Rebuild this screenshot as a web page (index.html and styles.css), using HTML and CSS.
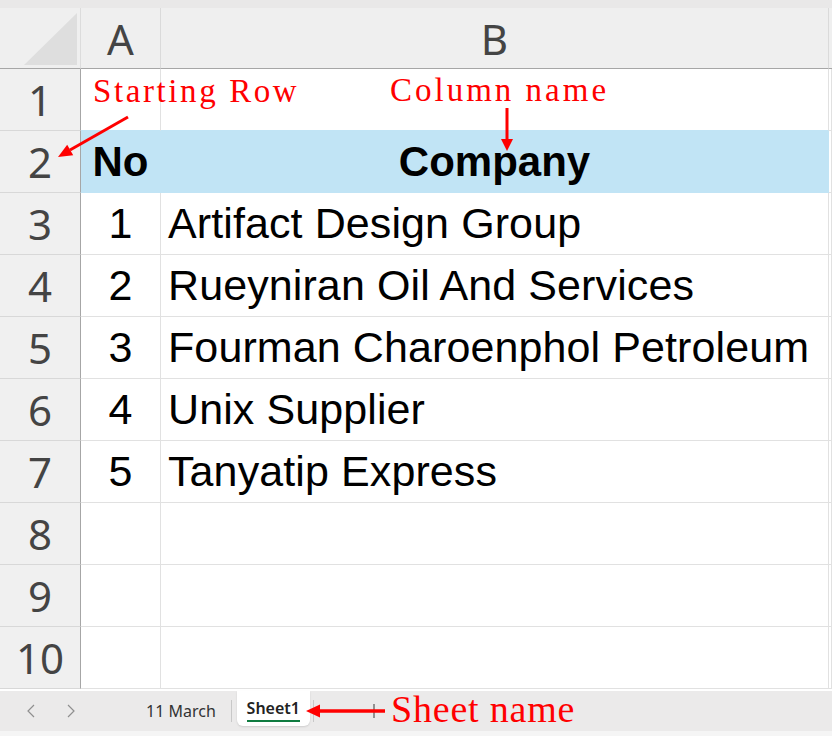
FILE: index.html
```html
<!DOCTYPE html>
<html>
<head>
<meta charset="utf-8">
<link rel="stylesheet" href="styles.css">
</head>
<body>
<div class="app">
  <div class="topstrip"></div>
  <div class="grid">
    <div class="cell corner"><div class="tri"></div></div>
    <div class="cell ch">A</div>
    <div class="cell ch">B</div>
    <div class="cell ch edge"></div>

    <div class="cell rh">1</div>
    <div class="cell c r1"></div>
    <div class="cell c r1"></div>
    <div class="cell c"></div>

    <div class="cell rh">2</div>
    <div class="cell c hdr num">No</div>
    <div class="cell c hdr center">Company</div>
    <div class="cell c"></div>

    <div class="cell rh">3</div>
    <div class="cell c num">1</div>
    <div class="cell c txt">Artifact Design Group</div>
    <div class="cell c"></div>

    <div class="cell rh">4</div>
    <div class="cell c num">2</div>
    <div class="cell c txt">Rueyniran Oil And Services</div>
    <div class="cell c"></div>

    <div class="cell rh">5</div>
    <div class="cell c num">3</div>
    <div class="cell c txt">Fourman Charoenphol Petroleum</div>
    <div class="cell c"></div>

    <div class="cell rh">6</div>
    <div class="cell c num">4</div>
    <div class="cell c txt">Unix Supplier</div>
    <div class="cell c"></div>

    <div class="cell rh">7</div>
    <div class="cell c num">5</div>
    <div class="cell c txt">Tanyatip Express</div>
    <div class="cell c"></div>

    <div class="cell rh">8</div>
    <div class="cell c"></div>
    <div class="cell c"></div>
    <div class="cell c"></div>

    <div class="cell rh">9</div>
    <div class="cell c"></div>
    <div class="cell c"></div>
    <div class="cell c"></div>

    <div class="cell rh">10</div>
    <div class="cell c"></div>
    <div class="cell c"></div>
    <div class="cell c"></div>
  </div>
  <div class="gap"></div>
  <div class="tabbar">
    <svg class="chev chev-l" width="8" height="14" viewBox="0 0 8 14"><polyline points="7,1 1,7 7,13" fill="none" stroke="#8f8f8f" stroke-width="1.2"/></svg>
    <svg class="chev chev-r" width="8" height="14" viewBox="0 0 8 14"><polyline points="1,1 7,7 1,13" fill="none" stroke="#8f8f8f" stroke-width="1.2"/></svg>
    <div class="tab">11 March</div>
    <div class="sep sep1"></div>
    <div class="tab active"><span class="tablabel">Sheet1</span></div>
    <div class="sep sep2"></div>
    <svg class="plus" width="14" height="14" viewBox="0 0 14 14"><line x1="7" y1="0" x2="7" y2="14" stroke="#555" stroke-width="1.2"/><line x1="0" y1="7" x2="14" y2="7" stroke="#555" stroke-width="1.2"/></svg>
  </div>
  <div class="bottomstrip"></div>

  <div class="note note-start">Starting Row</div>
  <div class="note note-col">Column name</div>
  <div class="note note-sheet">Sheet name</div>
  <svg class="arrows" width="832" height="736" viewBox="0 0 832 736">
    <line x1="128" y1="117" x2="70" y2="150" stroke="#ff0000" stroke-width="3"/>
    <polygon points="58,157 73.2,155.3 67.2,144.8" fill="#ff0000"/>
    <line x1="507" y1="108" x2="507" y2="140" stroke="#ff0000" stroke-width="3"/>
    <polygon points="501,139 513,139 507,151" fill="#ff0000"/>
    <line x1="318" y1="711" x2="385" y2="711" stroke="#ff0000" stroke-width="3.5"/>
    <polygon points="306,711 320,704.5 320,717.5" fill="#ff0000"/>
  </svg>
</div>
</body>
</html>
```

FILE: styles.css
```css
html, body {
  margin: 0;
  padding: 0;
  background: #ffffff;
}

.app {
  position: relative;
  width: 832px;
  height: 736px;
  overflow: hidden;
}

.topstrip {
  height: 8px;
  background: #e9e8e8;
}

.grid {
  display: grid;
  grid-template-columns: 81px 80px 668px 3px;
  grid-template-rows: 61px repeat(10, 62px);
}

.cell {
  box-sizing: border-box;
  border-right: 1px solid #e1e1e1;
  border-bottom: 1px solid #e1e1e1;
  display: flex;
  align-items: center;
  overflow: hidden;
  white-space: nowrap;
}

.corner {
  background: #efefef;
  border-right-color: #dcdcdc;
  border-bottom-color: #a6a6a6;
  justify-content: flex-end;
  align-items: flex-end;
  padding: 0 3px 3px 0;
}

.tri {
  width: 53px;
  height: 52px;
  background: #dedede;
  clip-path: polygon(100% 0, 100% 100%, 0 100%);
}

.ch {
  background: #efefef;
  border-bottom-color: #a6a6a6;
  border-right-color: #dadada;
  justify-content: center;
  font-family: "Noto Sans", sans-serif;
  font-size: 42px;
  color: #444444;
  padding-top: 1px;
}

.ch.edge {
  border-right: none;
}

.rh {
  background: #f0f0f0;
  border-right-color: #a6a6a6;
  border-bottom-color: #d8d8d8;
  justify-content: center;
  font-family: "Noto Sans", sans-serif;
  font-size: 42px;
  color: #444444;
}

.c {
  background: #ffffff;
  font-family: "Liberation Sans", Arial, sans-serif;
  font-size: 43px;
  color: #000000;
}

.r1 {
  border-bottom-color: #c1e4f5;
}

.hdr {
  background: #c1e4f5;
  border-right-color: #c1e4f5;
  border-bottom-color: #c1e4f5;
  font-weight: bold;
  font-size: 42px;
}

.num {
  justify-content: center;
}

.center {
  justify-content: center;
}

.txt {
  padding-left: 7px;
  letter-spacing: 0.1px;
}

.gap {
  height: 2px;
  background: #ffffff;
}

.tabbar {
  height: 40px;
  background: #ebeaea;
  display: flex;
  align-items: center;
  font-family: "Noto Sans", sans-serif;
  font-size: 16px;
  color: #333333;
}

.chev-l {
  margin-left: 27px;
}

.chev-r {
  margin-left: 32px;
}

.tab {
  margin-left: 71px;
}

.sep {
  width: 1px;
  height: 22px;
  background: #c8c8c8;
}

.sep1 {
  margin-left: 15px;
}

.tab.active {
  margin-left: 5px;
  align-self: flex-start;
  box-sizing: border-box;
  width: 73px;
  height: 35px;
  background: #ffffff;
  border-radius: 0 0 6px 6px;
  box-shadow: 0 1px 2px rgba(0, 0, 0, 0.12);
  display: flex;
  justify-content: center;
  align-items: center;
  font-weight: 600;
  color: #222222;
}

.tablabel {
  border-bottom: 2px solid #107c41;
  padding-bottom: 1px;
  margin-top: 2px;
}

.sep2 {
  margin-left: 3px;
}

.plus {
  margin-left: 53px;
}

.bottomstrip {
  height: 6px;
  background: #f5f5f5;
}

.note {
  position: absolute;
  color: #ff0000;
  font-family: "Liberation Serif", "Times New Roman", serif;
  line-height: 1;
  white-space: nowrap;
}

.note-start {
  left: 93px;
  top: 75px;
  font-size: 33px;
  letter-spacing: 2.6px;
}

.note-col {
  left: 390px;
  top: 74px;
  font-size: 33px;
  letter-spacing: 3px;
}

.note-sheet {
  left: 391px;
  top: 690px;
  font-size: 38px;
  letter-spacing: 0.8px;
}

.arrows {
  position: absolute;
  left: 0;
  top: 0;
  pointer-events: none;
}
```
